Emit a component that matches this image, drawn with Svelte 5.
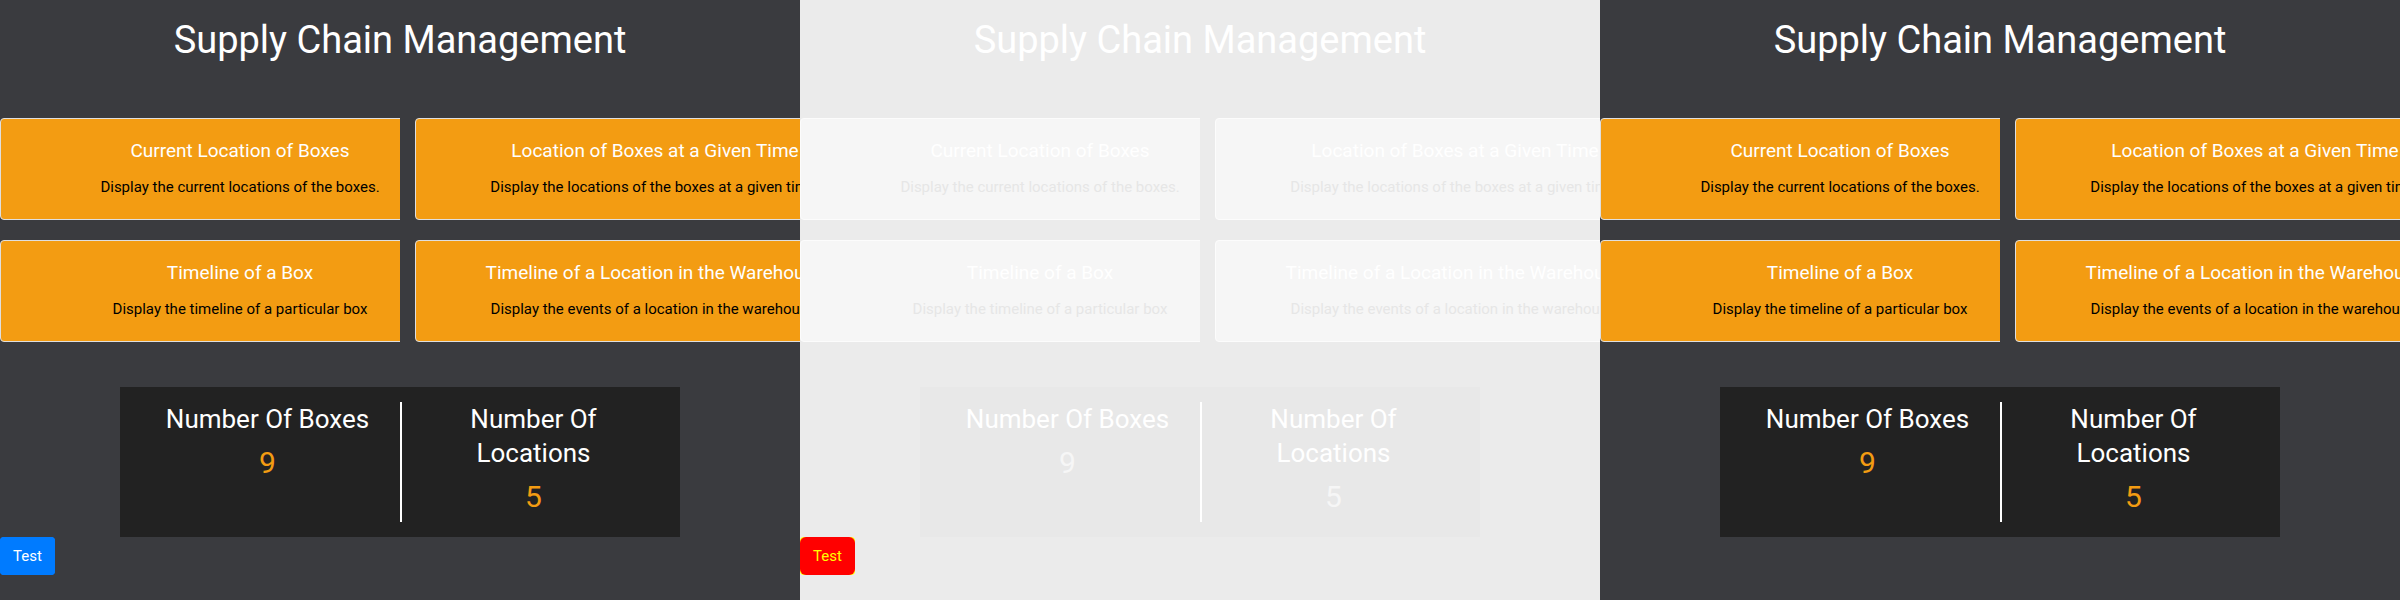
<script>
  const cards = [
    ['Current Location of Boxes', 'Display the current locations of the boxes.'],
    ['Location of Boxes at a Given Time', 'Display the locations of the boxes at a given time.'],
    ['Timeline of a Box', 'Display the timeline of a particular box'],
    ['Timeline of a Location in the Warehouse', 'Display the events of a location in the warehouse.']
  ];
  const stats = [
    ['Number Of Boxes', 9],
    ['Number Of Locations', 5]
  ];
  const panels = [
    { theme: 'dark', button: true },
    { theme: 'faded', button: true },
    { theme: 'dark', button: false }
  ];
</script>

<main>
  {#each panels as panel}
    <section class="panel {panel.theme}">
      <h1>Supply Chain Management</h1>
      <div class="cards">
        {#each cards as [title, text]}
          <div class="cell">
            <article class="card">
              <h2>{title}</h2>
              <p>{text}</p>
            </article>
          </div>
        {/each}
      </div>
      <div class="stats">
        {#each stats as [label, value]}
          <div class="stat">
            <h3>{label}</h3>
            <p>{value}</p>
          </div>
        {/each}
      </div>
      {#if panel.button}
        <button type="button"><span>Test</span></button>
      {/if}
    </section>
  {/each}
</main>

<style>
  :global(body) {
    margin: 0;
  }
  main {
    display: grid;
    grid-template-columns: repeat(3, 1fr);
    min-height: 100vh;
    font-family: Roboto, 'Open Sans', sans-serif;
    font-size: 15px;
    line-height: 24px;
  }
  .panel {
    --bg: #3a3b3f;
    --card: #f39c12;
    --edge: #dfdfdf;
    --text: #000;
    --box: #222;
    --accent: #f39c12;
    --button: #007bff;
    --corner: #007bff;
    --label: #fff;
    --inner-radius: 4px;
    min-width: 0;
    overflow: hidden;
    background: var(--bg);
    color: #fff;
    text-align: center;
  }
  .faded {
    --bg: #ebebeb;
    --card: #f6f6f6;
    --edge: #fcfcfc;
    --text: #e6e6e6;
    --box: #e8e8e8;
    --accent: #f6f6f6;
    --button: #f00;
    --corner: #ff0;
    --label: #ff0;
    --inner-radius: 6px;
  }
  h1,
  h2,
  h3,
  p {
    margin: 0;
    font-weight: 400;
  }
  h1 {
    padding: 16px 0 54px;
    font-size: 38px;
    line-height: 48px;
  }
  .cards {
    display: grid;
    grid-template-columns: 1fr 1fr;
    row-gap: 20px;
    container-type: inline-size;
  }
  .cell {
    min-width: 0;
    overflow: hidden;
  }
  .cell:nth-child(even) {
    margin-left: 15px;
  }
  .card {
    box-sizing: border-box;
    width: 60cqw;
    padding: 20px;
    border: 1px solid var(--edge);
    border-radius: 4px;
    background: var(--card);
    white-space: nowrap;
  }
  h2 {
    margin-bottom: 12px;
    font-size: 19px;
    line-height: 24px;
  }
  .card p {
    color: var(--text);
  }
  .stats {
    display: grid;
    grid-template-columns: 1fr 1fr;
    box-sizing: border-box;
    width: 70%;
    margin: 45px auto 0;
    padding: 15px;
    background: var(--box);
  }
  .stat {
    padding: 0 15px;
  }
  .stat + .stat {
    border-left: 2px solid #fff;
  }
  h3 {
    margin-bottom: 8px;
    font-size: 26px;
    line-height: 34px;
  }
  .stat p {
    margin-bottom: 6px;
    color: var(--accent);
    font-size: 30px;
    line-height: 38px;
  }
  button {
    display: block;
    padding: 0;
    border: 0;
    border-radius: 4px;
    background: var(--corner);
    color: var(--label);
    font: inherit;
  }
  button span {
    display: block;
    padding: 7px 13px;
    border-radius: var(--inner-radius);
    background: var(--button);
  }
</style>
